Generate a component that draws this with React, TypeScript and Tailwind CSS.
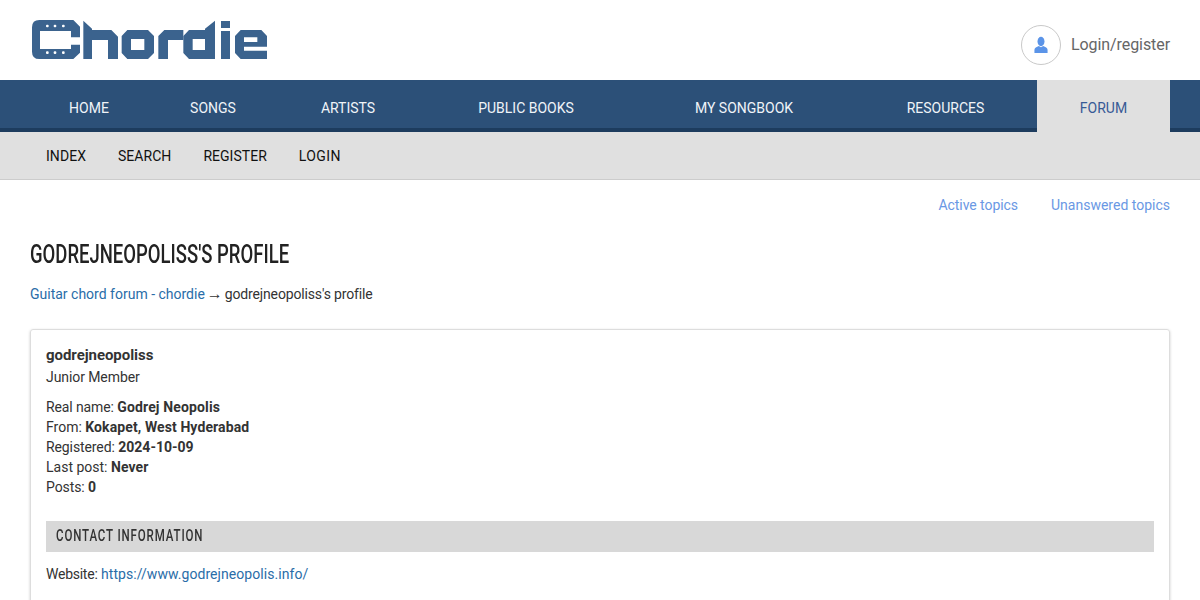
const navItems = [
  { label: "HOME", w: "w-[118px]" },
  { label: "SONGS", w: "w-[130px]" },
  { label: "ARTISTS", w: "w-[140px]" },
  { label: "PUBLIC BOOKS", w: "w-[216px]" },
  { label: "MY SONGBOOK", w: "w-[220px]" },
  { label: "RESOURCES", w: "w-[183px]" },
];

function Logo() {
  return (
    <svg width="260" height="60" viewBox="0 0 780 180" className="block blur-[0.4px]">
      <g fill="#3b638e">
        <path fillRule="evenodd" d="M36 52 Q36 30 58 30 H160 L180 50 V82 H153 V63 H60 V117 H153 V104 H180 V128 L160 147 H58 Q36 147 36 125 Z" />
        <path d="M190 32 L216 56 V60 H274 L294 80 V147 H264 V90 H216 V147 H190 Z" />
        <path fillRule="evenodd" d="M322 60 H384 L402 78 V129 L384 147 H322 L305 129 V78 Z M333 87 V120 H373 V87 Z" />
        <path d="M415 78 L433 60 H490 V90 H444 V147 H415 Z" />
        <path fillRule="evenodd" d="M555 56 L585 32 V147 H507 L490 129 V78 L507 60 H555 Z M518 87 V120 H555 V87 Z" />
        <path d="M603 33 H630 V54 H603 Z M603 63 H630 V147 H603 Z" />
        <path fillRule="evenodd" d="M662 60 H724 L741 78 V110 H672 V122 H741 V147 H662 L645 129 V78 Z M672 82 V96 H712 V82 Z" />
      </g>
      <g fill="#ffffff">
        <rect x="78" y="44" width="8" height="8" rx="3" />
        <rect x="101" y="44" width="8" height="8" rx="3" />
        <rect x="126" y="44" width="8" height="8" rx="3" />
        <rect x="78" y="124" width="8" height="8" rx="3" />
        <rect x="101" y="124" width="8" height="8" rx="3" />
        <rect x="126" y="124" width="8" height="8" rx="3" />
      </g>
    </svg>
  );
}

export default function App() {
  return (
    <div className="h-[600px] overflow-hidden bg-white font-['Roboto',sans-serif] text-sm text-[#333333]">
      <header className="flex h-20 items-start justify-between pl-5 pr-[30px]">
        <div className="pt-2.5">
          <Logo />
        </div>
        <div className="flex items-center gap-2.5 pt-[25px]">
          <div className="flex h-10 w-10 items-center justify-center rounded-full border border-[#c9c9c9]">
            <svg width="14" height="18" viewBox="0 0 16 20">
              <ellipse cx="8" cy="6" rx="4" ry="5.4" fill="#5b94e8" />
              <path d="M0.5 19 V15.5 C0.5 13 3 12 5.5 11 L8 12.5 L10.5 11 C13 12 15.5 13 15.5 15.5 V19 Z" fill="#5b94e8" />
            </svg>
          </div>
          <span className="text-base tracking-[-0.08px] text-[#666666]">Login/register</span>
        </div>
      </header>

      <nav className="flex h-[52px] border-b-4 border-[#1d3c5e] bg-[#2c5078] px-[30px]">
        {navItems.map((item) => (
          <a key={item.label} className={`${item.w} flex h-12 items-center justify-center pt-2 text-[#f0f4f8]`}>
            {item.label}
          </a>
        ))}
        <a className="flex h-[52px] w-[133px] items-center justify-center bg-[#e0e0e0] pt-1 text-[#375a96]">FORUM</a>
      </nav>

      <div className="flex h-12 items-center gap-8 border-b border-[#cccccc] bg-[#e0e0e0] pl-[46px] text-[#111111]">
        <a className="tracking-[0.05px]">INDEX</a>
        <a className="tracking-[0.05px]">SEARCH</a>
        <a className="tracking-[0.03px]">REGISTER</a>
        <a className="tracking-[0.4px]">LOGIN</a>
      </div>

      <main className="px-[30px]">
        <div className="flex justify-end gap-[33px] pt-[15px] text-[#6a98e4]">
          <a className="tracking-[-0.06px]">Active topics</a>
          <a>Unanswered topics</a>
        </div>
        <h1 className="mt-[21px] origin-left scale-x-[0.711] whitespace-nowrap text-[26px] font-medium leading-9 text-[#222222]">
          GODREJNEOPOLISS'S PROFILE
        </h1>
        <p className="mt-3 h-5 leading-5">
          <a className="text-[#2a6da8]">Guitar chord forum - chordie</a>{" "}
          <span className="-mx-[1.5px] font-['Liberation_Sans',sans-serif] text-base leading-none">→</span>{" "}
          <span className="tracking-[-0.15px]">godrejneopoliss's profile</span>
        </p>

        <section className="mt-[25px] rounded-[3px] border border-[#dddddd] px-[15px] pt-3.5 pb-8 shadow-[0_1px_3px_rgba(0,0,0,0.2)]">
          <div className="leading-[22px]">
            <div className="text-[15px] font-bold tracking-[-0.05px]">godrejneopoliss</div>
            <div className="tracking-[-0.08px]">Junior Member</div>
          </div>
          <div className="mt-[9px] leading-5">
            <div><span className="tracking-[-0.12px]">Real name:</span> <b className="tracking-[0.14px]">Godrej Neopolis</b></div>
            <div>From: <b className="tracking-[0.1px]">Kokapet, West Hyderabad</b></div>
            <div><span className="tracking-[-0.1px]">Registered:</span> <b>2024-10-09</b></div>
            <div>Last post: <b className="tracking-[0.1px]">Never</b></div>
            <div><span className="tracking-[-0.1px]">Posts:</span> <b>0</b></div>
          </div>
          <h2 className="mt-6 flex h-[31px] items-center bg-[#d8d8d8] px-2.5 pb-0.5 text-[#333333]">
            <span className="origin-left scale-x-[0.72] whitespace-nowrap text-base font-medium tracking-[1.2px]">CONTACT INFORMATION</span>
          </h2>
          <p className="mt-3 leading-5">
            <span className="tracking-[-0.25px]">Website:</span>{" "}
            <a className="tracking-[0.06px] text-[#2a6da8]">https://www.godrejneopolis.info/</a>
          </p>
        </section>
      </main>
    </div>
  );
}
